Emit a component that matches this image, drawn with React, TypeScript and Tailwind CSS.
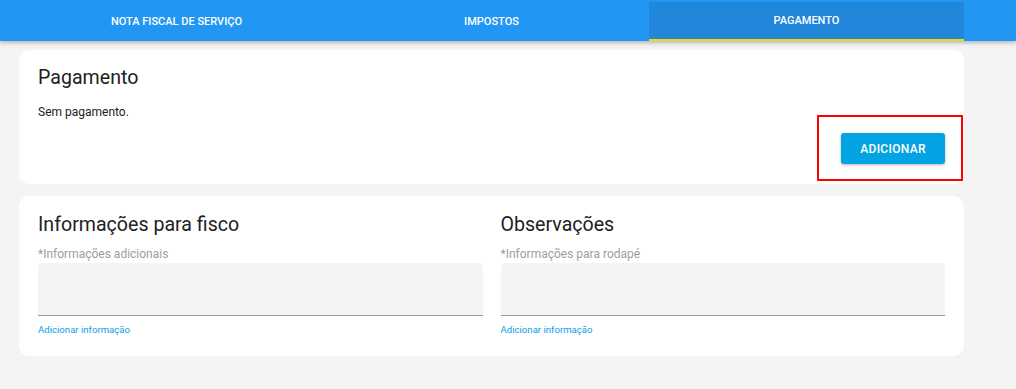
import React from "react";

const tabs = ["NOTA FISCAL DE SERVIÇO", "IMPOSTOS", "PAGAMENTO"];

const InfoField: React.FC<{ title: string; label: string }> = ({ title, label }) => (
  <div className="flex-1">
    <h2 className="text-[19.6px] leading-6 text-[#212121]">{title}</h2>
    <label className="block mt-[9px] text-[12px] leading-4 text-[#9e9e9e]">{label}</label>
    <div className="mt-[1px] h-[53px] rounded-t-[4px] bg-[#f4f4f4] border-b border-[#9a9a9a]" />
    <a className="block mt-[7px] text-[9.6px] leading-[14px] text-[#0a9ee6]">Adicionar informação</a>
  </div>
);

export default function App() {
  return (
    <div className="relative min-h-[389px] bg-[#f4f4f4] font-['Roboto',sans-serif]">
      <header className="h-[41px] bg-[#2196f3] shadow-[0_2px_4px_rgba(0,0,0,0.25)]">
        <nav className="ml-[19px] w-[945px] h-full grid grid-cols-3 pt-[2px]">
          {tabs.map((tab) => {
            const active = tab === "PAGAMENTO";
            return (
              <div
                key={tab}
                className={
                  active
                    ? "flex items-center justify-center pt-[2px] text-[11px] font-medium text-white bg-[#2087da] border-b-2 border-[#f5d90a]"
                    : "flex items-center justify-center pt-[2px] text-[11px] font-medium text-white"
                }
              >
                {tab}
              </div>
            );
          })}
        </nav>
      </header>

      <main className="ml-[19px] w-[945px] pt-[9px] space-y-3">
        <section className="bg-white rounded-[10px] px-[19px] pt-4 pb-5">
          <h2 className="text-[19.6px] leading-6 text-[#212121]">Pagamento</h2>
          <p className="mt-[14px] text-[12px] leading-4 text-[#212121]">Sem pagamento.</p>
          <div className="flex justify-end mt-[13px]">
            <button className="w-[104px] h-[31px] rounded-[3px] bg-[#03a4e3] text-white text-[12px] font-medium tracking-[0.3px] shadow-[0_1px_3px_rgba(0,0,0,0.3)]">
              ADICIONAR
            </button>
          </div>
        </section>

        <section className="bg-white rounded-[10px] px-[19px] pt-[17px] pb-[19px] flex gap-[18px]">
          <InfoField title="Informações para fisco" label="*Informações adicionais" />
          <InfoField title="Observações" label="*Informações para rodapé" />
        </section>
      </main>

      <div className="absolute left-[817px] top-[115px] w-[146px] h-[66px] border-2 border-[#ff0000]" />
    </div>
  );
}
